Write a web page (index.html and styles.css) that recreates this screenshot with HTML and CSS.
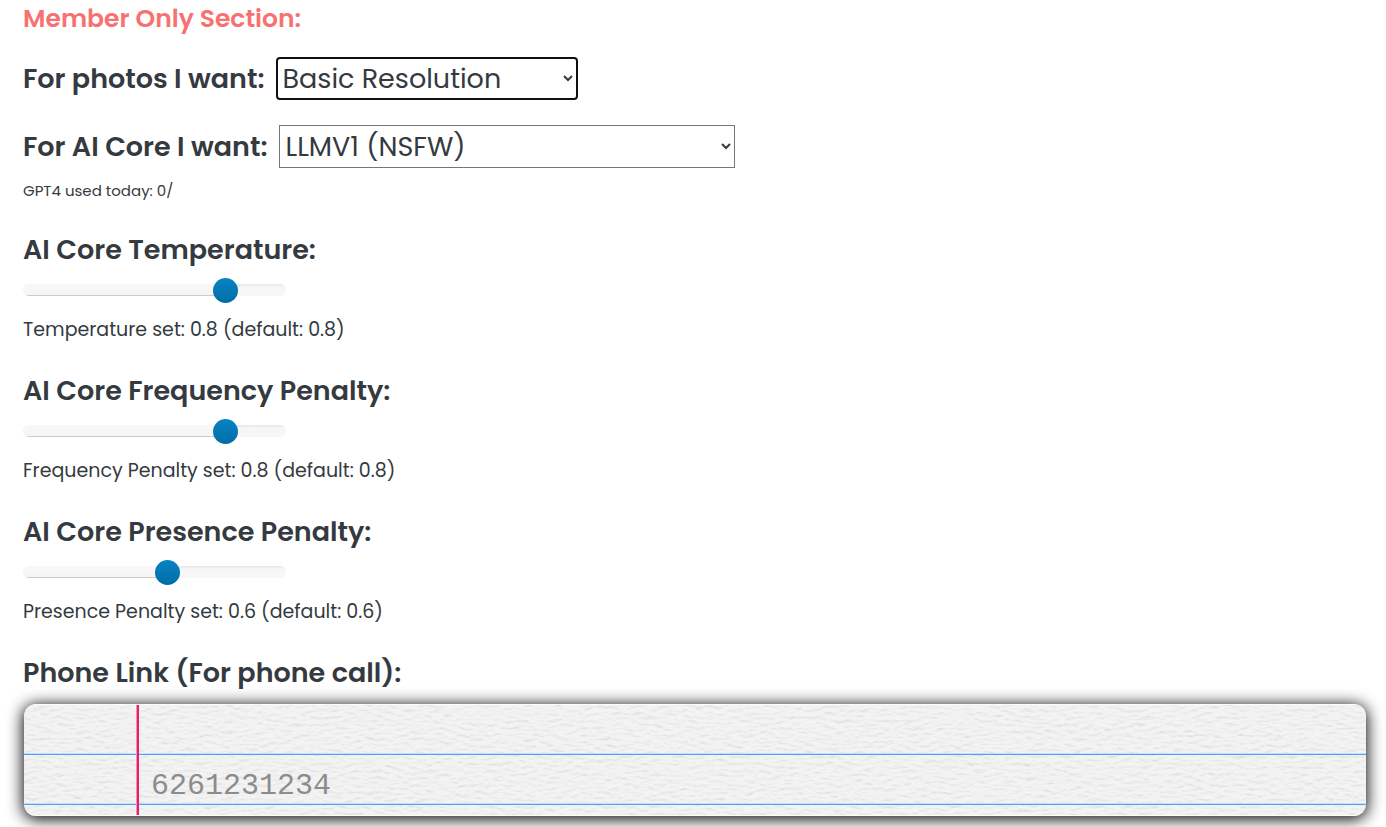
FILE: index.html
```
<!DOCTYPE html>
<html lang="en">
<head>
<meta charset="utf-8">
<meta name="viewport" content="width=device-width, initial-scale=1">
<title>Member settings</title>
<link rel="stylesheet" href="styles.css">
</head>
<body>
<main class="settings">
  <h2 class="title section-title">Member Only Section:</h2>
  <div class="row">
    <label class="title" for="resolution">For photos I want:</label>
    <select class="select select-active" id="resolution"><option>Basic Resolution</option></select>
  </div>
  <div class="row row-core">
    <label class="title" for="core">For AI Core I want:</label>
    <select class="select select-wide" id="core"><option>LLMV1 (NSFW)</option></select>
  </div>
  <p class="usage">GPT4 used today: 0/</p>

  <div class="group">
    <label class="title" for="temperature">AI Core Temperature:</label>
    <input class="slider" id="temperature" type="range" min="0" max="1" step="0.1" value="0.8" style="--fill: 80%">
    <p class="note">Temperature set: 0.8 (default: 0.8)</p>
  </div>
  <div class="group">
    <label class="title" for="frequency">AI Core Frequency Penalty:</label>
    <input class="slider" id="frequency" type="range" min="0" max="1" step="0.1" value="0.8" style="--fill: 80%">
    <p class="note">Frequency Penalty set: 0.8 (default: 0.8)</p>
  </div>
  <div class="group">
    <label class="title" for="presence">AI Core Presence Penalty:</label>
    <input class="slider" id="presence" type="range" min="0.1" max="1" step="0.1" value="0.6" style="--fill: 56%">
    <p class="note">Presence Penalty set: 0.6 (default: 0.6)</p>
  </div>

  <label class="title phone-title" for="phone">Phone Link (For phone call):</label>
  <div class="paper">
    <svg class="grain" aria-hidden="true">
      <filter id="fibre" x="0" y="0" width="100%" height="100%" color-interpolation-filters="sRGB">
        <feTurbulence type="fractalNoise" baseFrequency="0.1 0.28" numOctaves="3" seed="4" result="noise"/>
        <feDiffuseLighting in="noise" surfaceScale="1" diffuseConstant="1.1" lighting-color="#fff">
          <feDistantLight azimuth="270" elevation="62"/>
        </feDiffuseLighting>
      </filter>
      <rect width="100%" height="100%" filter="url(#fibre)"/>
    </svg>
    <textarea class="paper-input" id="phone" rows="1" placeholder="6261231234"></textarea>
  </div>
</main>
</body>
</html>
```
FILE: styles.css
```
* { box-sizing: border-box; }

body {
  margin: 0;
  background: #fff;
  color: #343a40;
  font-family: Poppins, Inter, sans-serif;
  font-weight: 400;
}

.settings {
  display: flex;
  flex-direction: column;
  padding: 0 20px 11px 23px;
}

.title {
  margin: 0;
  font-size: 27px;
  font-weight: 600;
  line-height: 36px;
}

.section-title {
  padding-top: 1px;
  color: #f87171;
  font-size: 25px;
}

.row {
  display: flex;
  align-items: center;
  gap: 11px;
  margin-top: 20px;
}

.row-core { margin-top: 25px; }

.select {
  width: 302px;
  height: 43px;
  padding: 0 0 0 2px;
  border: 1px solid #767676;
  border-radius: 0;
  background: #fff;
  color: #343a40;
  font: 400 27px Poppins, Inter, sans-serif;
}

.select-active {
  padding-left: 1px;
  border: 2px solid #101010;
  border-radius: 4px;
}

.select-wide { width: 456px; }

.usage {
  margin: 12px 0 30px;
  font-size: 15px;
  line-height: 22px;
}

.group {
  display: flex;
  flex-direction: column;
  align-items: flex-start;
  margin-bottom: 29px;
}

.slider {
  width: 263px;
  height: 25px;
  margin: 9px 0 14px;
  background: transparent;
  appearance: none;
}

.slider::-webkit-slider-runnable-track {
  height: 12px;
  border-radius: 6px;
  background:
    linear-gradient(transparent 11px, #ccc 11px) 0 0 / var(--fill) 100% no-repeat,
    linear-gradient(#f8f8f8, #f4f4f4) 0 0 / var(--fill) 100% no-repeat,
    linear-gradient(#e6e6e6, #f6f6f6 3px, #f8f8f8);
}

.slider::-webkit-slider-thumb {
  width: 25px;
  height: 25px;
  margin-top: -6px;
  border-radius: 50%;
  background: linear-gradient(#0784c3, #006da5);
  appearance: none;
}

.note {
  margin: 0;
  font-size: 19px;
  line-height: 28px;
}

.phone-title { margin-bottom: 13px; }

.paper {
  position: relative;
  display: flex;
  margin-left: 1px;
  overflow: hidden;
  border-radius: 12px;
  background: #f0f0f0;
  box-shadow: 0 2px 16px 1px #000;
}

.grain {
  position: absolute;
  inset: 0;
  width: 100%;
  height: 100%;
  opacity: 0.24;
}

.paper-input {
  position: relative;
  flex: 1;
  height: 112px;
  padding: 56px 12px 6px 127px;
  overflow: hidden;
  border: solid #fffc;
  border-width: 1px 0;
  border-radius: 12px;
  outline: none;
  resize: none;
  background-color: transparent;
  background-image:
    linear-gradient(90deg, transparent 112px, #f48fb1 112px, #f48fb1 113px, #e91e63 113px, #e91e63 115px, transparent 115px),
    linear-gradient(transparent 48px, #c4dcf4 48px, #c4dcf4 49px, #4aa3ff 49px);
  background-size: 100% 100%, 100% 50px;
  background-clip: padding-box;
  color: #777;
  font: 30px "Liberation Mono", monospace;
  line-height: 50px;
}

.paper-input::placeholder { color: #8c8c8c; }
```
